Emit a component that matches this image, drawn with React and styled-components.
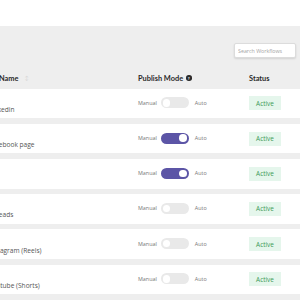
import React from "react";
import styled, { createGlobalStyle } from "styled-components";

const GlobalStyle = createGlobalStyle`
  html, body {
    margin: 0;
    padding: 0;
    background: #fff;
    font-family: "Open Sans", "Liberation Sans", sans-serif;
    overflow: hidden;
  }
`;

const Page = styled.div`
  width: 300px;
  height: 300px;
  display: flex;
  flex-direction: column;
  overflow: hidden;
`;

const TopBar = styled.div`
  height: 26px;
  flex-shrink: 0;
  background: #fff;
`;

const Panel = styled.div`
  flex: 1;
  background: #eeeeee;
  display: flex;
  flex-direction: column;
`;

const Toolbar = styled.div`
  display: flex;
  justify-content: flex-end;
  padding: 17px 4px 0 0;
`;

const SearchInput = styled.input`
  width: 62px;
  height: 15px;
  box-sizing: border-box;
  border: 1px solid #dcdcdc;
  border-radius: 2px;
  background: #fff;
  box-shadow: 0 1px 2px rgba(0, 0, 0, 0.12);
  padding: 0 3px;
  font-family: "Open Sans", sans-serif;
  font-size: 5.3px;
  color: #999;
  outline: none;
  &::placeholder {
    color: #a5a5a5;
  }
`;

const Table = styled.div`
  margin-left: -10px;
  display: flex;
  flex-direction: column;
  gap: 5.6px;
`;

const Grid = styled.div`
  display: grid;
  grid-template-columns: 148px 111px 1fr;
  align-items: center;
`;

const HeadRow = styled(Grid)`
  height: 16px;
  margin-top: 12px;
  margin-bottom: -3px;
`;

const HeadCell = styled.div`
  font-family: "Lato", "Liberation Sans", sans-serif;
  font-weight: 700;
  font-size: 7.4px;
  color: #2a2a2a;
  display: flex;
  align-items: center;
  gap: ${(p) => (p.$first ? "6px" : "3px")};
  padding-left: ${(p) => (p.$first ? "9px" : "0")};
`;

const SortMark = styled.span`
  color: #d6d6d6;
  font-size: 5.5px;
  font-weight: 400;
`;

const Help = styled.span`
  width: 5.5px;
  height: 5.5px;
  border-radius: 50%;
  background: #2a2a2a;
  color: #fff;
  font-size: 4.5px;
  font-weight: 700;
  display: inline-flex;
  align-items: center;
  justify-content: center;
`;

const Row = styled(Grid)`
  height: 29.6px;
  background: #fff;
`;

const Name = styled.div`
  font-size: 6.6px;
  color: #555;
  padding-top: 12px;
  margin-left: -1.5px;
  white-space: nowrap;
`;

const Mode = styled.div`
  display: flex;
  align-items: center;
  padding-bottom: 1px;
`;

const ModeLabel = styled.span`
  font-size: 5.4px;
  color: #777;
  margin-left: ${(p) => (p.$after ? "6px" : "0")};
  margin-right: ${(p) => (p.$after ? "0" : "4px")};
`;

const Switch = styled.span`
  width: 28px;
  height: 11px;
  border-radius: 6px;
  background: ${(p) => (p.$on ? "#5c55a6" : "#e9e9e9")};
  display: flex;
  align-items: center;
  justify-content: ${(p) => (p.$on ? "flex-end" : "flex-start")};
  padding: 0 2px;
  box-sizing: border-box;
  &::after {
    content: "";
    width: 7.5px;
    height: 7.5px;
    border-radius: 50%;
    background: #fff;
  }
`;

const Badge = styled.span`
  justify-self: start;
  width: 32px;
  height: 14px;
  background: #e5f6ec;
  color: #3a9956;
  font-size: 6.4px;
  font-weight: 400;
  display: flex;
  align-items: center;
  justify-content: center;
`;

const workflows = [
  { name: "Linkedin", on: false },
  { name: "Facebook page", on: true },
  { name: "X", on: true },
  { name: "Threads", on: false },
  { name: "Instagram (Reels)", on: false },
  { name: "Youtube (Shorts)", on: false },
];

export default function App() {
  return (
    <Page>
      <GlobalStyle />
      <TopBar />
      <Panel>
        <Toolbar>
          <SearchInput placeholder="Search Workflows" />
        </Toolbar>
        <Table>
          <HeadRow>
            <HeadCell $first>
              Name <SortMark>↕</SortMark>
            </HeadCell>
            <HeadCell>
              Publish Mode <Help>?</Help>
            </HeadCell>
            <HeadCell>Status</HeadCell>
          </HeadRow>
          {workflows.map((w) => (
            <Row key={w.name}>
              <Name>{w.name}</Name>
              <Mode>
                <ModeLabel>Manual</ModeLabel>
                <Switch $on={w.on} />
                <ModeLabel $after>Auto</ModeLabel>
              </Mode>
              <Badge>Active</Badge>
            </Row>
          ))}
        </Table>
      </Panel>
    </Page>
  );
}
